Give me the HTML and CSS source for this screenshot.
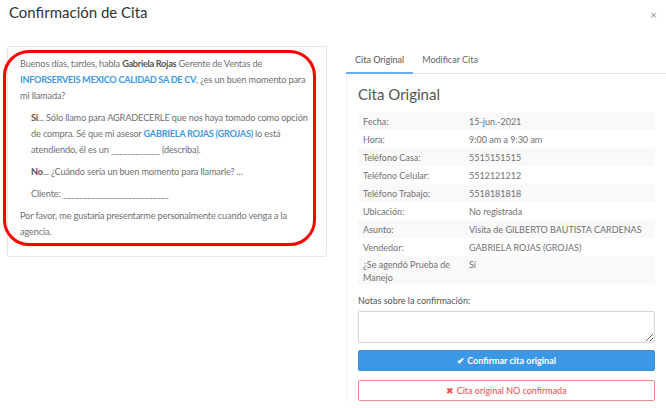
FILE: index.html
```html
<!DOCTYPE html>
<html lang="es">
  <head>
    <meta charset="UTF-8" />
    <title>Confirmación de Cita</title>
    <link rel="stylesheet" href="styles.css">
  </head>
  <body>
    <div class="modal-header">
      <h4 class="modal-title">Confirmación de Cita</h4>
      <span class="close">&times;</span>
    </div>

    <div class="modal-body">
      <div class="script-col">
        <div class="script-card">
          <div class="mark"></div>
          <p>Buenos días, tardes, habla <b>Gabriela Rojas</b> Gerente de Ventas de
            <b class="blue">INFORSERVEIS MEXICO CALIDAD SA DE CV</b>, ¿es un buen momento para mi llamada?</p>
          <p class="indent"><b>Si</b>... Sólo llamo para AGRADECERLE que nos haya tomado como opción de compra. Sé que mi asesor
            <b class="blue">GABRIELA ROJAS (GROJAS)</b> lo está atendiendo, él es un ____________ (describa).</p>
          <p class="indent"><b>No</b>... ¿Cuándo sería un buen momento para llamarle? ...</p>
          <p class="indent">Cliente: __________________________</p>
          <p>Por favor, me gustaría presentarme personalmente cuando venga a la agencia.</p>
        </div>
      </div>

      <div class="detail-col">
        <ul class="tabs">
          <li class="active">Cita Original</li>
          <li>Modificar Cita</li>
        </ul>
        <div class="tab-pane">
          <h3>Cita Original</h3>
          <table class="info">
            <tr><td>Fecha:</td><td>15-jun.-2021</td></tr>
            <tr><td>Hora:</td><td>9:00 am a 9:30 am</td></tr>
            <tr><td>Teléfono Casa:</td><td>5515151515</td></tr>
            <tr><td>Teléfono Celular:</td><td>5512121212</td></tr>
            <tr><td>Teléfono Trabajo:</td><td>5518181818</td></tr>
            <tr><td>Ubicación:</td><td>No registrada</td></tr>
            <tr><td>Asunto:</td><td>Visita de GILBERTO BAUTISTA CARDENAS</td></tr>
            <tr><td>Vendedor:</td><td>GABRIELA ROJAS (GROJAS)</td></tr>
            <tr><td>¿Se agendó Prueba de Manejo</td><td>Sí</td></tr>
          </table>

          <label class="notes-label" for="notas">Notas sobre la confirmación:</label>
          <textarea id="notas" class="notes"></textarea>

          <button class="btn btn-confirm">&#10004; Confirmar cita original</button>
          <button class="btn btn-reject">&#10006; Cita original NO confirmada</button>
        </div>
      </div>
    </div>
  </body>
</html>
```

FILE: styles.css
```css
body {
  margin: 0;
  font-family: Lato, "Open Sans", sans-serif;
  color: #707070;
  background: #fff;
  width: 666px;
  height: 408px;
  overflow: hidden;
}

.modal-header {
  display: flex;
  justify-content: space-between;
  align-items: flex-start;
  height: 46px;
  padding: 0 9px;
  box-sizing: border-box;
}

.modal-title {
  margin: 3px 0 0;
  font-size: 15px;
  font-weight: normal;
  color: #333;
}

.close {
  margin-top: 7px;
  font-size: 12px;
  color: #999;
}

.modal-body {
  display: flex;
}

.script-col {
  width: 320px;
  margin-left: 7px;
}

.script-card {
  position: relative;
  border: 1px solid #e6e8ee;
  border-radius: 2px;
  padding: 9px 16px 10px 12px;
  font-size: 9.2px;
  letter-spacing: -0.15px;
  line-height: 16px;
}

.script-card p {
  margin: 0 0 6px;
}

.script-card .indent {
  padding-left: 11px;
}

.script-card b {
  color: #555;
  letter-spacing: -0.3px;
}

.script-card .blue {
  color: #3d9be6;
}

.mark {
  position: absolute;
  left: -5px;
  top: 3px;
  width: 307px;
  height: 190px;
  border: 3px solid #f00;
  border-radius: 26px;
}

.detail-col {
  flex: 1;
  margin-left: 19px;
}

.tabs {
  display: flex;
  list-style: none;
  margin: 0;
  padding: 0;
  border-bottom: 1px solid #e6e8ee;
  font-size: 9px;
}

.tabs li {
  padding: 8px 9px 7px;
  color: #666;
}

.tabs li.active {
  border-bottom: 2px solid #6aaee6;
  margin-bottom: -1px;
  color: #555;
}

.tab-pane {
  border-left: 1px solid #f1f2f5;
  padding: 0 11px;
}

.tab-pane h3 {
  margin: 0;
  padding: 11px 0 9px;
  font-size: 15px;
  font-weight: normal;
  color: #555;
}

.info {
  width: 100%;
  border-collapse: collapse;
  font-size: 9px;
}

.info td {
  padding: 0 5px;
  height: 18px;
  vertical-align: middle;
}

.info td:first-child {
  width: 96px;
}

.info tr:nth-child(odd) {
  background: #f9f9f9;
}

.info tr:last-child td {
  line-height: 13px;
  padding-top: 2px;
  vertical-align: top;
}

.notes-label {
  display: block;
  margin-top: 11px;
  font-size: 9px;
  color: #555;
}

.notes {
  display: block;
  width: 100%;
  height: 32px;
  box-sizing: border-box;
  margin-top: 5px;
  border: 1px solid #cfd4dd;
  border-radius: 2px;
  resize: vertical;
}

.btn {
  display: block;
  width: 100%;
  height: 21px;
  margin-top: 7px;
  border-radius: 2px;
  font-family: Lato, "Open Sans", sans-serif;
  font-size: 9px;
  cursor: pointer;
}

.btn-confirm {
  background: #3c97e4;
  border: 1px solid #3a8fd8;
  color: #fff;
  font-weight: bold;
}

.btn-reject {
  margin-top: 9px;
  background: #fff;
  border: 1px solid #f28b8b;
  color: #ee4b4b;
}
```
